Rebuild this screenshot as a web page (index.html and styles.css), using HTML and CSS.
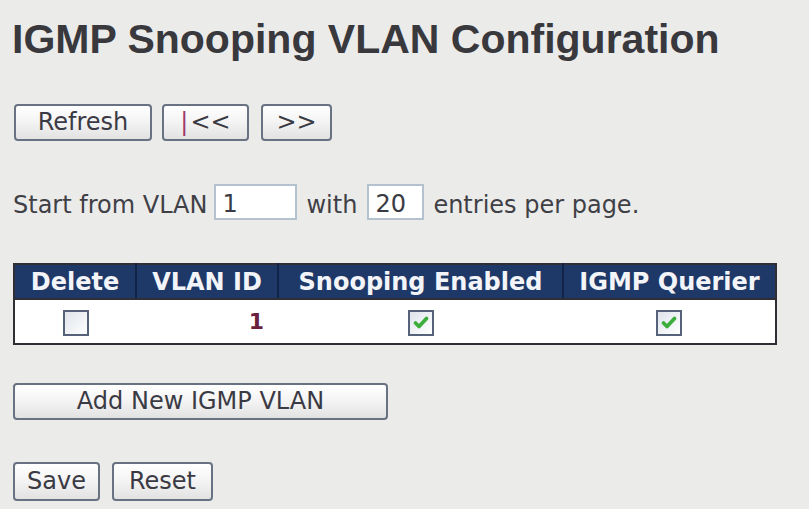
FILE: index.html
```html
<!DOCTYPE html>
<html lang="en">
<head>
  <meta charset="UTF-8">
  <title>IGMP Snooping VLAN Configuration</title>
  <link rel="stylesheet" href="styles.css">
</head>
<body>
  <h1 class="page-title">IGMP Snooping VLAN Configuration</h1>

  <!-- Paging buttons -->
  <div class="button-row nav-row">
    <button class="btn btn-refresh">Refresh</button>
    <button class="btn btn-first"><span class="bar">|</span>&lt;&lt;</button>
    <button class="btn btn-next">&gt;&gt;</button>
  </div>

  <!-- Paging range -->
  <div class="range-row">
    <span>Start from VLAN</span>
    <input type="text" class="range-input start-input" value="1">
    <span>with</span>
    <input type="text" class="range-input count-input" value="20">
    <span>entries per page.</span>
  </div>

  <!-- VLAN table -->
  <table class="config-table">
    <thead>
      <tr>
        <th class="col-delete">Delete</th>
        <th class="col-vid">VLAN ID</th>
        <th class="col-snoop">Snooping Enabled</th>
        <th class="col-querier">IGMP Querier</th>
      </tr>
    </thead>
    <tbody>
      <tr>
        <td class="c"><input type="checkbox" class="cb"></td>
        <td class="r vid">1</td>
        <td class="c"><input type="checkbox" class="cb" checked></td>
        <td class="c"><input type="checkbox" class="cb" checked></td>
      </tr>
    </tbody>
  </table>

  <div class="button-row add-row">
    <button class="btn btn-add">Add New IGMP VLAN</button>
  </div>

  <div class="button-row save-row">
    <button class="btn btn-save">Save</button>
    <button class="btn btn-reset">Reset</button>
  </div>
</body>
</html>
```

FILE: styles.css
```css
/* General */
body {
  margin: 0;
  padding: 0 13px;
  background-color: #ebebea;
  color: #3a3a3e;
  font-family: "DejaVu Sans", Verdana, sans-serif;
  font-size: 24px;
}

.page-title {
  margin: 15px 0 0 -1px;
  font-family: "Liberation Sans", Arial, sans-serif;
  font-size: 41px;
  line-height: 48px;
  font-weight: bold;
  color: #38383d;
}

/* Buttons */
.button-row {
  display: flex;
  gap: 10px;
}
.nav-row {
  margin-top: 41px;
  margin-left: 1px;
}
.btn {
  height: 37px;
  padding: 0 12px;
  border: 2px solid #687282;
  border-radius: 4px;
  background: linear-gradient(#ffffff, #f3f3f3 50%, #e2e2e2);
  color: #3a3a44;
  font-family: "DejaVu Sans", Verdana, sans-serif;
  font-size: 24px;
  line-height: 31px;
}
.btn-refresh { width: 138px; }
.btn-first { width: 87px; }
.btn-next { width: 71px; margin-left: 2px; }
.btn .bar { color: #a03a6a; margin-right: 2px; }

/* Paging range */
.range-row {
  display: flex;
  align-items: center;
  margin-top: 43px;
  height: 36px;
  color: #3f3f46;
}
.range-row span { padding-top: 5px; }
.range-input {
  box-sizing: border-box;
  height: 36px;
  margin: 0 9px 0 7px;
  padding: 3px 6px 0;
  border: 2px solid #b4c2d0;
  background-color: #fff;
  color: #3a3a44;
  font-family: "DejaVu Sans", Verdana, sans-serif;
  font-size: 24px;
}
.start-input { width: 83px; }
.count-input { width: 57px; margin-left: 10px; }

/* Table */
.config-table {
  margin-top: 43px;
  border-collapse: collapse;
  border: 2px solid #2e2e34;
  background-color: #fff;
}
.config-table th {
  height: 33px;
  padding: 0 12px;
  background-color: #1e3868;
  color: #f2f4f8;
  font-size: 24px;
  font-weight: bold;
  border-left: 2px solid #112448;
  border-bottom: 2px solid #2e2e34;
  white-space: nowrap;
}
.config-table th:first-child { border-left: none; }
.col-delete { width: 96px; }
.col-vid { width: 116px; }
.col-snoop { width: 259px; }
.col-querier { width: 187px; }
.config-table td {
  height: 43px;
  padding: 0 14px;
}
.c { text-align: center; }
.r { text-align: right; }
.vid {
  color: #6a1f3c;
  font-weight: bold;
  font-size: 22px;
}

/* Checkboxes */
.cb {
  appearance: none;
  box-sizing: border-box;
  width: 26px;
  height: 26px;
  margin: 2px 0 0;
  border: 2px solid #56627a;
  background: linear-gradient(135deg, #dfe4ea, #ffffff);
  vertical-align: middle;
}
.cb:checked {
  background-image: url("data:image/svg+xml,%3Csvg xmlns='http://www.w3.org/2000/svg' viewBox='0 0 22 22'%3E%3Cpath d='M5.5 11l3.5 3.5 7.5-8' fill='none' stroke='%233cae3c' stroke-width='3.8' stroke-linecap='round' stroke-linejoin='round'/%3E%3C/svg%3E"), linear-gradient(135deg, #dfe4ea, #ffffff);
}

/* Bottom buttons */
.add-row { margin-top: 38px; }
.btn-add { width: 375px; }
.save-row { margin-top: 42px; gap: 12px; }
.btn-save { width: 87px; padding: 0; height: 39px; }
.btn-reset { width: 101px; padding: 0; height: 39px; }
```
